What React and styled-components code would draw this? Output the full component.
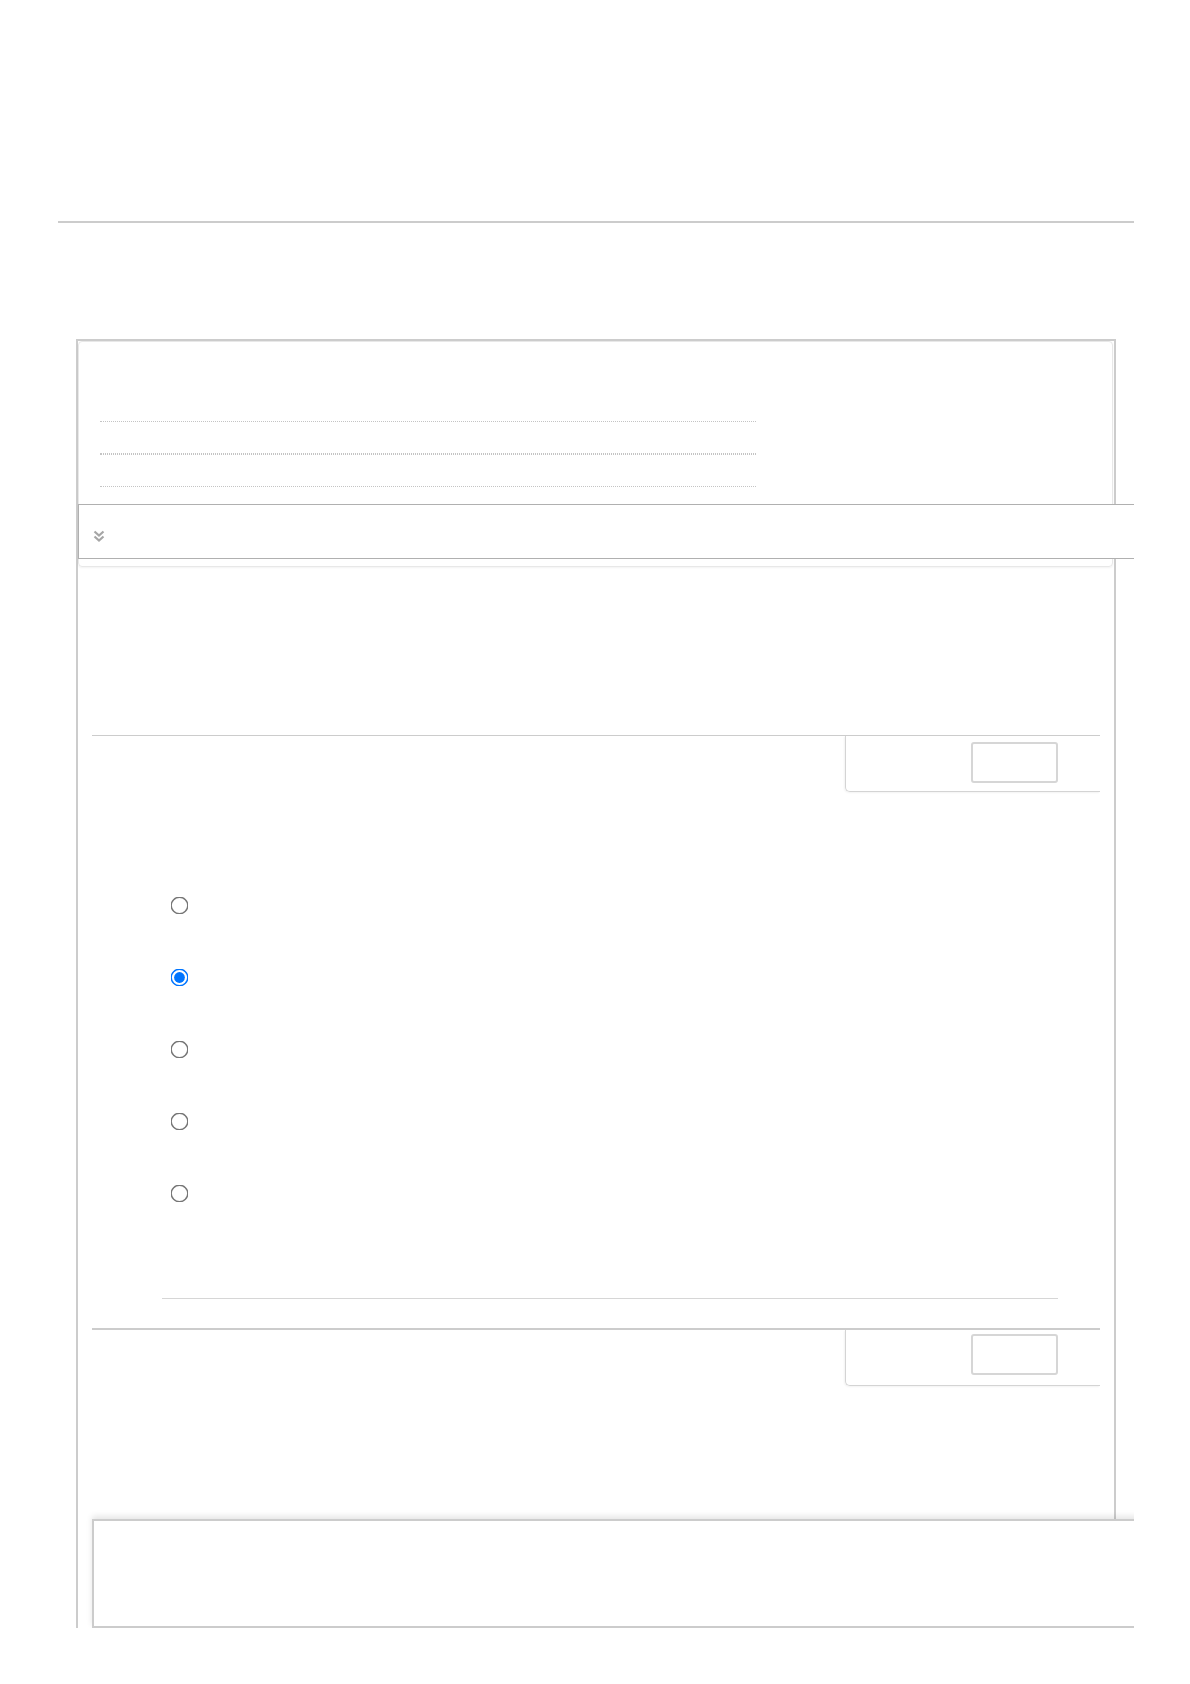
import React from "react";
import styled, { createGlobalStyle } from "styled-components";

const Global = createGlobalStyle`
  html, body {
    margin: 0;
    padding: 0;
    background: #fff;
    font-family: "Liberation Sans", Arial, sans-serif;
  }
`;

const Page = styled.div`
  width: 1076px;
  height: 1628px;
  margin-left: 58px;
  overflow: hidden;
`;

const Header = styled.header`
  height: 221px;
  border-bottom: 2px solid #cccccc;
`;

const Frame = styled.main`
  margin: 116px 0 0 18px;
  width: 1036px;
  border: 2px solid #cccccc;
  border-bottom: none;
  display: flex;
  flex-direction: column;
`;

const Card = styled.section`
  width: 1033px;
  border: 1px solid #e8e8e8;
  border-radius: 4px;
  box-shadow: 0 1px 2px rgba(0, 0, 0, 0.05);
  padding-top: 79px;
`;

const DottedList = styled.ul`
  list-style: none;
  margin: 0 0 0 21px;
  padding: 0;
  width: 656px;
`;

const DottedRow = styled.li`
  height: 31px;
  border-top: 1px dotted #c4c4c4;
  border-bottom: 1px dotted #c4c4c4;
`;

const Collapser = styled.button`
  display: flex;
  align-items: center;
  box-sizing: border-box;
  width: 1080px;
  height: 55px;
  margin: 17px 0 7px -1px;
  padding: 8px 0 0 14px;
  border: 1px solid #b0b0b0;
  background: #fff;
  cursor: pointer;
`;

const Section = styled.section`
  margin: ${(p) => p.$top}px 14px 0;
  border-top: ${(p) => p.$rule}px solid #cccccc;
  display: flex;
  flex-direction: column;
`;

const Tab = styled.div`
  align-self: flex-end;
  box-sizing: border-box;
  width: 255px;
  height: 56px;
  border-left: 1px solid #d4d4d4;
  border-bottom: 1px solid #d4d4d4;
  border-bottom-left-radius: 5px;
  box-shadow: -1px 1px 2px rgba(0, 0, 0, 0.05);
  padding: ${(p) => p.$pad}px 0 0 125px;
`;

const TabButton = styled.button`
  box-sizing: border-box;
  width: 87px;
  height: 41px;
  border: 2px solid #d6d6d6;
  border-radius: 3px;
  background: #fff;
  display: block;
`;

const Options = styled.div`
  margin: 77px 0 0 78px;
  display: flex;
  flex-direction: column;
`;

const Option = styled.label`
  height: 72px;
  display: flex;
  align-items: center;
  padding-left: 3px;
`;

const Radio = styled.input.attrs({ type: "radio", name: "answer" })`
  width: 13px;
  height: 13px;
  margin: 0;
  transform: scale(1.38);
`;

const Divider = styled.hr`
  margin: 69px 0 29px 70px;
  width: 896px;
  border: none;
  border-top: 1px solid #d6d6d6;
  height: 0;
`;

const Footer = styled.div`
  box-sizing: border-box;
  width: 1060px;
  height: 109px;
  margin: 133px 0 0 14px;
  border: 2px solid #cccccc;
  background: #fff;
  box-shadow: 0 -3px 6px rgba(0, 0, 0, 0.1);
`;

const ChevronsDown = () => (
  <svg width="12" height="12" viewBox="0 0 12 12" fill="none" stroke="#a6a6a6" strokeWidth="2.2">
    <polyline points="1.5,1.5 6,5.5 10.5,1.5" />
    <polyline points="1.5,6.5 6,10.5 10.5,6.5" />
  </svg>
);

const App = () => {
  const [picked, setPicked] = React.useState(1);
  return (
    <Page>
      <Global />
      <Header />
      <Frame>
        <Card>
          <DottedList>
            <DottedRow />
            <DottedRow />
          </DottedList>
          <Collapser aria-label="expand">
            <ChevronsDown />
          </Collapser>
        </Card>
        <Section $top={168} $rule={1}>
          <Tab $pad={6}>
            <TabButton />
          </Tab>
          <Options>
            {[0, 1, 2, 3, 4].map((i) => (
              <Option key={i}>
                <Radio checked={picked === i} onChange={() => setPicked(i)} />
              </Option>
            ))}
          </Options>
          <Divider />
        </Section>
        <Section $top={0} $rule={2}>
          <Tab $pad={4}>
            <TabButton />
          </Tab>
        </Section>
        <Footer />
      </Frame>
    </Page>
  );
};

export default App;
